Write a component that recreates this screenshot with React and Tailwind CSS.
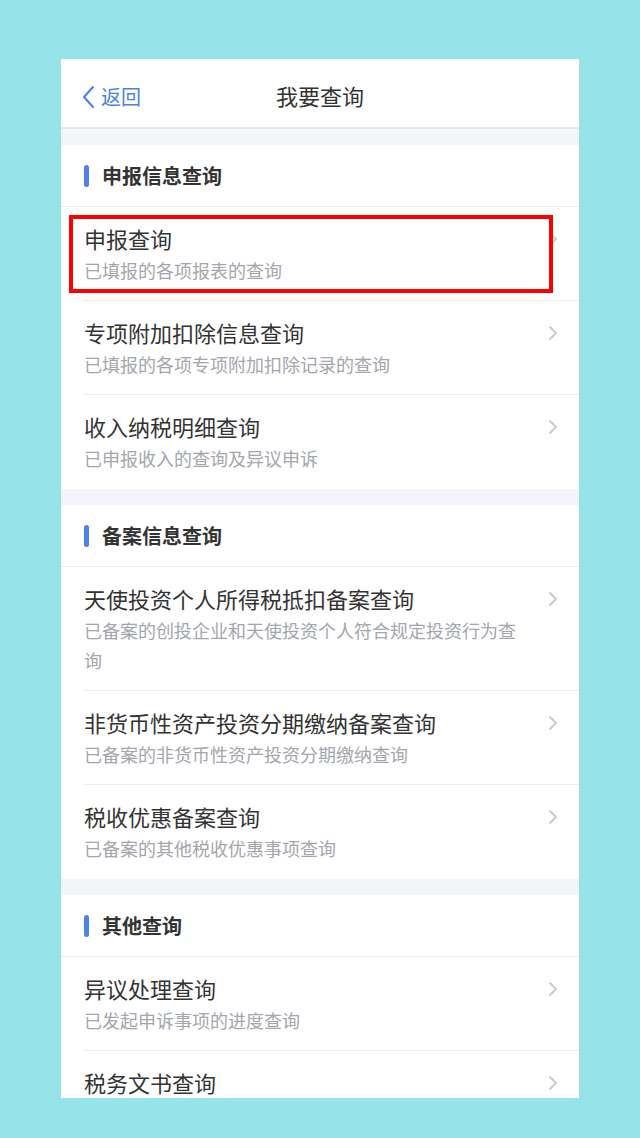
const sections = [
  {
    title: "申报信息查询",
    items: [
      { title: "申报查询", desc: "已填报的各项报表的查询", marked: true },
      { title: "专项附加扣除信息查询", desc: "已填报的各项专项附加扣除记录的查询" },
      { title: "收入纳税明细查询", desc: "已申报收入的查询及异议申诉" },
    ],
  },
  {
    title: "备案信息查询",
    items: [
      { title: "天使投资个人所得税抵扣备案查询", desc: "已备案的创投企业和天使投资个人符合规定投资行为查询" },
      { title: "非货币性资产投资分期缴纳备案查询", desc: "已备案的非货币性资产投资分期缴纳查询" },
      { title: "税收优惠备案查询", desc: "已备案的其他税收优惠事项查询" },
    ],
  },
  {
    title: "其他查询",
    items: [
      { title: "异议处理查询", desc: "已发起申诉事项的进度查询" },
      { title: "税务文书查询", desc: "已收到的各类税务文书查询" },
    ],
  },
];

const Arrow = () => (
  <svg width="10" height="16" viewBox="0 0 10 16" fill="none" className="mt-[8px] shrink-0">
    <path d="M2 2 L8 8 L2 14" stroke="#c8c9cd" strokeWidth="1.8" strokeLinecap="round" strokeLinejoin="round" />
  </svg>
);

const Row = ({ item, last }) => (
  <div className="relative pl-[23px]">
    <div className={`flex items-start border-b pr-[21px] pt-[16px] pb-[15px] ${last ? "border-white" : "border-[#ececef]"}`}>
      <div className="flex-1 pr-[20px]">
        <div className="text-[22px] leading-[30px] text-[#333333]">{item.title}</div>
        <div className="mt-[2px] text-[18px] leading-[30px] text-[#a3a6ad]">{item.desc}</div>
      </div>
      <Arrow />
    </div>
    {item.marked && (
      <div className="absolute left-[8px] top-[8px] h-[78px] w-[484px] border-[4px] border-[#ff0000]" />
    )}
  </div>
);

export default function App() {
  return (
    <div
      className="h-[1138px] overflow-hidden bg-[#96e4ea] px-[61px] pt-[59px]"
      style={{ fontFamily: '"Noto Sans CJK SC", "Noto Sans", sans-serif' }}
    >
      <div className="h-[1039px] w-[518px] overflow-hidden bg-white">
        <div className="relative flex h-[70px] items-center justify-center border-b-2 border-[#e6e7ea] pt-[4px]">
          <div className="absolute left-[21px] top-[26px] flex items-center text-[20px] leading-[24px] text-[#4a80e6]">
            <svg width="13" height="24" viewBox="0 0 13 24" fill="none" className="mr-[6px]">
              <path d="M11 2 L2 12 L11 22" stroke="#4a80e6" strokeWidth="2" strokeLinecap="round" strokeLinejoin="round" />
            </svg>
            返回
          </div>
          <div className="text-[22px] text-[#333333]">我要查询</div>
        </div>
        {sections.map((s) => (
          <div key={s.title}>
            <div className="h-[16px] bg-[#f4f5f8]" />
            <div className="flex h-[62px] items-center border-b border-[#ececef] pl-[23px]">
              <div className="mr-[13px] h-[22px] w-[5px] rounded-full bg-[#4d82ee]" />
              <div className="text-[20px] font-bold text-[#333333]">{s.title}</div>
            </div>
            {s.items.map((it, i) => (
              <Row key={it.title} item={it} last={i === s.items.length - 1} />
            ))}
          </div>
        ))}
      </div>
    </div>
  );
}
